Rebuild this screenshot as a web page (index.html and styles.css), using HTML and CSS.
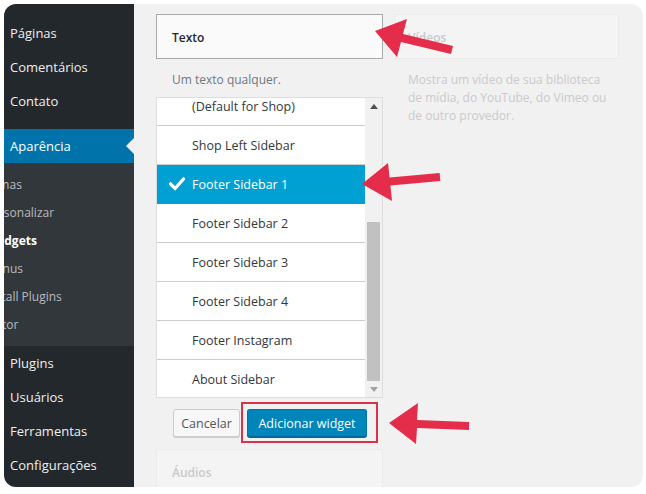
FILE: index.html
```html
<!DOCTYPE html>
<html lang="pt-BR">
<head>
<meta charset="utf-8">
<title>Widgets</title>
<link rel="stylesheet" href="styles.css">
</head>
<body>
<div class="frame">
  <nav class="sidebar">
    <ul class="menu">
      <li class="item">Páginas</li>
      <li class="item">Comentários</li>
      <li class="item">Contato</li>
      <li class="sep"></li>
      <li class="item current">Aparência</li>
      <li class="submenu">
        <ul>
          <li>Temas</li>
          <li>Personalizar</li>
          <li class="sub-current">Widgets</li>
          <li>Menus</li>
          <li>Install Plugins</li>
          <li>Editor</li>
        </ul>
      </li>
      <li class="item">Plugins</li>
      <li class="item">Usuários</li>
      <li class="item">Ferramentas</li>
      <li class="item">Configurações</li>
    </ul>
  </nav>

  <main class="content">
    <section class="col col-left">
      <div class="widget-title">Texto</div>
      <p class="desc">Um texto qualquer.</p>
      <div class="chooser">
        <ul class="chooser-list">
          <li>(Default for Shop)</li>
          <li>Shop Left Sidebar</li>
          <li class="selected">
            <svg class="check" width="16" height="14" viewBox="0 0 16 14"><polyline points="1.5,7 6,11.5 14.5,2" fill="none" stroke="#fff" stroke-width="3.2" stroke-linecap="square"/></svg>
            Footer Sidebar 1
          </li>
          <li>Footer Sidebar 2</li>
          <li>Footer Sidebar 3</li>
          <li>Footer Sidebar 4</li>
          <li>Footer Instagram</li>
          <li>About Sidebar</li>
        </ul>
        <div class="scrollbar">
          <div class="sb-btn sb-up"><svg width="8" height="5" viewBox="0 0 8 5"><polygon points="0,5 4,0 8,5" fill="#505050"/></svg></div>
          <div class="sb-track"><div class="sb-thumb"></div></div>
          <div class="sb-btn sb-down"><svg width="8" height="5" viewBox="0 0 8 5"><polygon points="0,0 8,0 4,5" fill="#a3a3a3"/></svg></div>
        </div>
      </div>
      <div class="actions">
        <button class="btn btn-cancel">Cancelar</button>
        <button class="btn btn-primary">Adicionar widget</button>
      </div>
      <div class="widget-title faded">Áudios</div>
    </section>

    <section class="col col-right">
      <div class="widget-title faded">Vídeos</div>
      <p class="desc faded-desc">Mostra um vídeo de sua biblioteca<br>de mídia, do YouTube, do Vimeo ou<br>de outro provedor.</p>
    </section>
  </main>

  <svg class="annotations" width="646" height="494" viewBox="0 0 646 494">
    <rect x="242" y="403" width="135" height="39" fill="none" stroke="#d8334a" stroke-width="2"/>
    <polygon points="375,31 407,19 403,34 453,46 451,54 401,42 397,57" fill="#e32d4a"/>
    <polygon points="362,184 388,163 389.6,177.5 439.6,173 440.4,181 390.4,185.5 392,201" fill="#e32d4a"/>
    <polygon points="389,423 418,403 417,420 469,422 469,430 417,428 416,444" fill="#e32d4a"/>
  </svg>
</div>
</body>
</html>
```

FILE: styles.css
```css
html, body {
  margin: 0;
  padding: 0;
  background: #ffffff;
}

body {
  font-family: "Open Sans", "Noto Sans", sans-serif;
}

.frame {
  position: relative;
  margin: 4px;
  width: 639px;
  height: 483px;
  border-radius: 12px;
  overflow: hidden;
  background: #f1f1f1;
  display: flex;
}

/* ---------- sidebar ---------- */
.sidebar {
  width: 130px;
  flex: none;
  background: #23282d;
  padding-top: 12px;
  box-sizing: border-box;
  overflow: hidden;
}

.menu,
.menu ul {
  list-style: none;
  margin: 0;
  padding: 0;
}

.item {
  position: relative;
  height: 34px;
  line-height: 34px;
  padding-left: 6px;
  color: #eeeeee;
  font-size: 13px;
  white-space: nowrap;
}

.sep {
  height: 11px;
}

.current {
  background: #0073aa;
  color: #ffffff;
}

.current::after {
  content: "";
  position: absolute;
  right: 0;
  top: 50%;
  margin-top: -8px;
  border: 8px solid transparent;
  border-right-color: #f1f1f1;
}

.submenu {
  background: #32373c;
  padding: 7px 0 8px;
}

.submenu li {
  height: 28px;
  line-height: 30px;
  margin-left: -19px;
  color: rgba(240, 245, 250, 0.7);
  font-size: 12px;
  white-space: nowrap;
}

.submenu .sub-current {
  color: #ffffff;
  font-weight: 700;
  margin-left: -15px;
}

/* ---------- content ---------- */
.content {
  flex: 1;
  display: flex;
  align-items: flex-start;
  gap: 12px;
  padding: 10px 0 0 22px;
}

.col-left {
  width: 227px;
  flex: none;
}

.col-right {
  width: 224px;
  flex: none;
}

.widget-title {
  height: 45px;
  box-sizing: border-box;
  border: 1px solid #a7aaad;
  background: #fafafa;
  padding-left: 15px;
  line-height: 45px;
  font-size: 12px;
  font-weight: 600;
  color: #23282d;
}

.widget-title.faded {
  border-color: #ebebeb;
  background: #f4f4f4;
  color: #c9c9c9;
  padding-left: 12px;
}

.col-left .widget-title.faded {
  margin-top: 12px;
  padding-left: 15px;
}

.desc {
  margin: 12px 0 8px;
  padding-left: 16px;
  font-size: 12px;
  line-height: 18px;
  color: #72777c;
}

.faded-desc {
  padding-left: 13px;
  color: #cacaca;
}

/* ---------- sidebar chooser ---------- */
.chooser {
  height: 301px;
  box-sizing: border-box;
  border: 1px solid #dddddd;
  background: #ffffff;
  display: flex;
}

.chooser-list {
  flex: 1;
  overflow: hidden;
  list-style: none;
  margin: 0;
  padding: 0;
}

.chooser-list li {
  position: relative;
  height: 39px;
  box-sizing: border-box;
  border-bottom: 1px solid #cccccc;
  line-height: 40px;
  padding-left: 35px;
  font-size: 12.5px;
  color: #32373c;
  white-space: nowrap;
}

.chooser-list li:first-child {
  margin-top: -11px;
}

.chooser-list li.selected {
  background: #00a0d2;
  color: #ffffff;
  border-bottom-color: #00a0d2;
}

.check {
  position: absolute;
  left: 12px;
  top: 12px;
}

.scrollbar {
  width: 17px;
  flex: none;
  background: #f1f1f1;
  display: flex;
  flex-direction: column;
}

.sb-btn {
  display: flex;
  align-items: center;
  justify-content: center;
}

.sb-up {
  height: 17px;
}

.sb-down {
  height: 16px;
}

.sb-track {
  flex: 1;
}

.sb-thumb {
  margin: 107px 0 0 2px;
  width: 13px;
  height: 159px;
  background: #c1c1c1;
}

/* ---------- buttons ---------- */
.actions {
  display: flex;
  gap: 7px;
  margin-top: 11px;
  padding-left: 17px;
}

.btn {
  height: 28px;
  box-sizing: border-box;
  padding: 0;
  border-radius: 3px;
  font-family: "Open Sans", "Noto Sans", sans-serif;
  font-size: 12.5px;
  line-height: 28px;
  text-align: center;
  cursor: pointer;
}

.btn-cancel {
  width: 67px;
  border: 1px solid #cccccc;
  background: #f7f7f7;
  color: #555555;
  box-shadow: 0 1px 0 #cccccc;
}

.btn-primary {
  width: 120px;
  border: 1px solid #0073aa;
  border-bottom-color: #006799;
  background: #0085ba;
  color: #ffffff;
  box-shadow: 0 1px 0 #006799;
}

/* ---------- annotations ---------- */
.annotations {
  position: absolute;
  left: -4px;
  top: -4px;
  pointer-events: none;
}
```
